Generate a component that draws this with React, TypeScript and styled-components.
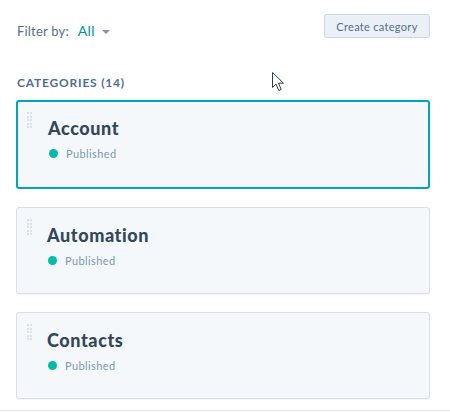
import React from "react";
import styled, { createGlobalStyle } from "styled-components";

const Global = createGlobalStyle`
  html, body { margin: 0; padding: 0; background: #fff; }
  body { font-family: Lato, "Open Sans", "Liberation Sans", sans-serif; -webkit-font-smoothing: antialiased; }
  * { box-sizing: border-box; }
`;

const Page = styled.div`
  position: relative;
  width: 450px;
  height: 412px;
  overflow: hidden;
`;

const Content = styled.div`
  padding: 14px 20px 0 16px;
  display: flex;
  flex-direction: column;
`;

const Toolbar = styled.div`
  display: flex;
  justify-content: space-between;
  align-items: flex-start;
  height: 24px;
`;

const Filter = styled.div`
  display: flex;
  align-items: center;
  gap: 9px;
  padding: 8px 0 0 1px;
  font-size: 13px;
  letter-spacing: 0.2px;
  color: #516f90;
`;

const FilterValue = styled.span`
  display: flex;
  align-items: center;
  gap: 7px;
  font-size: 14px;
  letter-spacing: 0.3px;
  color: #0091ae;
`;

const Caret = styled.span`
  width: 0;
  height: 0;
  border-left: 4px solid transparent;
  border-right: 4px solid transparent;
  border-top: 4px solid #7c98b6;
  margin-top: 2px;
`;

const Button = styled.button`
  width: 106px;
  height: 24px;
  border: 1px solid #cbd6e2;
  border-radius: 3px;
  background: #eaf0f6;
  color: #516f90;
  font-family: inherit;
  font-size: 11px;
  letter-spacing: 0.3px;
  padding: 0;
`;

const SectionTitle = styled.h2`
  margin: 38px 0 0 1px;
  font-size: 12px;
  font-weight: 700;
  letter-spacing: 0.8px;
  color: #516f90;
  text-transform: uppercase;
  line-height: 14px;
`;

const List = styled.div`
  display: flex;
  flex-direction: column;
  gap: 18px;
  margin-top: 10px;
`;

const Card = styled.div<{ $active?: boolean }>`
  position: relative;
  height: ${(p) => (p.$active ? 89 : 87)}px;
  border: ${(p) => (p.$active ? "2px solid #00a4bd" : "1px solid #d6dfe8")};
  border-radius: 3px;
  background: #f5f8fa;
  padding: ${(p) => (p.$active ? "15px 0 0 30px" : "16px 0 0 30px")};
  display: flex;
  flex-direction: column;
  gap: 8px;
  box-shadow: ${(p) => (p.$active ? "none" : "0 1px 1px rgba(45,62,80,0.06)")};
`;

const Handle = styled.div<{ $active?: boolean }>`
  position: absolute;
  left: ${(p) => (p.$active ? 9 : 10)}px;
  top: ${(p) => (p.$active ? 10 : 11)}px;
  display: grid;
  grid-template-columns: repeat(2, 2px);
  grid-auto-rows: 2px;
  column-gap: 1px;
  row-gap: 1.5px;
  & > span {
    background: #d0dae5;
    border-radius: 1px;
  }
`;

const Title = styled.div`
  font-size: 18px;
  font-weight: 900;
  letter-spacing: 0.6px;
  color: #33475b;
  line-height: 22px;
`;

const Status = styled.div`
  display: flex;
  align-items: center;
  gap: 8px;
  font-size: 11px;
  letter-spacing: 0.4px;
  color: #7c98b6;
  padding-left: 1px;
`;

const Dot = styled.span`
  width: 9px;
  height: 9px;
  border-radius: 50%;
  background: #00bda5;
`;

const BottomRule = styled.div`
  position: absolute;
  left: 0;
  right: 0;
  bottom: 1px;
  height: 1px;
  background: #dfe3eb;
`;

const Cursor = styled.svg`
  position: absolute;
  left: 271px;
  top: 71px;
`;

const cats = ["Account", "Automation", "Contacts"];

export default function App() {
  return (
    <Page>
      <Global />
      <Content>
        <Toolbar>
          <Filter>
            Filter by:
            <FilterValue>
              All <Caret />
            </FilterValue>
          </Filter>
          <Button>Create category</Button>
        </Toolbar>
        <SectionTitle>Categories (14)</SectionTitle>
        <List>
          {cats.map((c, i) => (
            <Card key={c} $active={i === 0}>
              <Handle $active={i === 0}>
                {Array.from({ length: 10 }).map((_, k) => (
                  <span key={k} />
                ))}
              </Handle>
              <Title>{c}</Title>
              <Status>
                <Dot />
                Published
              </Status>
            </Card>
          ))}
        </List>
      </Content>
      <BottomRule />
      <Cursor width="16" height="22" viewBox="0 0 16 22">
        <path
          d="M1.5 1.5 L1.5 16.5 L5 13 L7.8 19.5 L10.2 18.4 L7.5 12.2 L12.5 12.2 Z"
          fill="#fff"
          stroke="#2d3e50"
          strokeWidth="1"
          strokeLinejoin="round"
        />
      </Cursor>
    </Page>
  );
}
